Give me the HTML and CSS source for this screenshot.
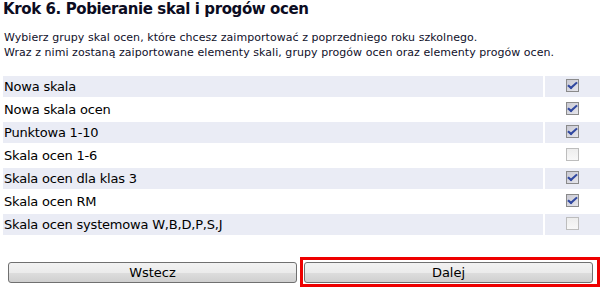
FILE: index.html
```html
<!DOCTYPE html>
<html lang="pl">
<head>
<meta charset="utf-8">
<title>Krok 6</title>
<link rel="stylesheet" href="styles.css">
</head>
<body>
<h1 class="title">Krok 6. Pobieranie skal i progów ocen</h1>
<p class="desc">Wybierz grupy skal ocen, które chcesz zaimportować z poprzedniego roku szkolnego.<br>Wraz z nimi zostaną zaiportowane elementy skali, grupy progów ocen oraz elementy progów ocen.</p>
<div class="list">
  <div class="cell label shade">Nowa skala</div><div class="cell chk shade"><span class="box on"></span></div>
  <div class="cell label">Nowa skala ocen</div><div class="cell chk"><span class="box on"></span></div>
  <div class="cell label shade">Punktowa 1-10</div><div class="cell chk shade"><span class="box on"></span></div>
  <div class="cell label">Skala ocen 1-6</div><div class="cell chk"><span class="box"></span></div>
  <div class="cell label shade">Skala ocen dla klas 3</div><div class="cell chk shade"><span class="box on"></span></div>
  <div class="cell label">Skala ocen RM</div><div class="cell chk"><span class="box on"></span></div>
  <div class="cell label shade">Skala ocen systemowa W,B,D,P,S,J</div><div class="cell chk shade"><span class="box"></span></div>
</div>
<div class="buttons">
  <button class="btn" type="button">Wstecz</button>
  <button class="btn" type="button">Dalej</button>
</div>
<div class="highlight"></div>
</body>
</html>
```
FILE: styles.css
```css
html, body {
  margin: 0;
  background: #ffffff;
}
body {
  padding: 0 2px 0 3px;
  font-family: "DejaVu Sans", Verdana, sans-serif;
  color: #000;
  position: relative;
  height: 287px;
  box-sizing: border-box;
  overflow: hidden;
}
.title {
  margin: 0;
  font-size: 15px;
  line-height: 18px;
  font-weight: bold;
  color: #0c0c22;
  letter-spacing: -0.4px;
}
.desc {
  margin: 12px 0 0 1px;
  font-size: 11px;
  line-height: 15px;
  color: #10102a;
  letter-spacing: 0.05px;
}
.list {
  margin-top: 16px;
  display: grid;
  grid-template-columns: 540px 55px;
  grid-auto-rows: 21px;
  column-gap: 2px;
  row-gap: 2px;
}
.cell {
  font-size: 13px;
  line-height: 21px;
  white-space: nowrap;
}
.label {
  padding-left: 1px;
  letter-spacing: -0.2px;
}
.shade {
  background: #eaecf5;
}
.chk {
  display: flex;
  align-items: center;
  justify-content: center;
  padding-bottom: 2px;
  box-sizing: border-box;
}
.box {
  width: 13px;
  height: 13px;
  box-sizing: border-box;
  border: 1px solid #bdbdbd;
  background: linear-gradient(#ededed, #f8f8f8);
  position: relative;
}
.box.on {
  border-color: #8a8a8a;
  background: linear-gradient(135deg, #c9c9d2, #e6e6ec);
}
.box.on::after {
  content: "";
  position: absolute;
  left: 3px;
  top: 0px;
  width: 3px;
  height: 7px;
  border-right: 2px solid #3048a0;
  border-bottom: 2px solid #3048a0;
  transform: rotate(40deg) skewX(-8deg);
}
.buttons {
  margin-top: 27px;
  padding-left: 5px;
  display: grid;
  grid-template-columns: 289px 289px;
  column-gap: 7px;
}
.btn {
  height: 21px;
  margin: 0;
  padding: 0;
  border: 1px solid #707070;
  border-radius: 3px;
  background: linear-gradient(#f2f2f2 0%, #ebebeb 50%, #dddddd 51%, #cfcfcf 100%);
  font-family: "DejaVu Sans", Verdana, sans-serif;
  font-size: 13px;
  line-height: 19px;
  color: #000;
}
.highlight {
  position: absolute;
  left: 300px;
  top: 257px;
  width: 300px;
  height: 30px;
  box-sizing: border-box;
  border: 3px solid #ee0000;
}
```
